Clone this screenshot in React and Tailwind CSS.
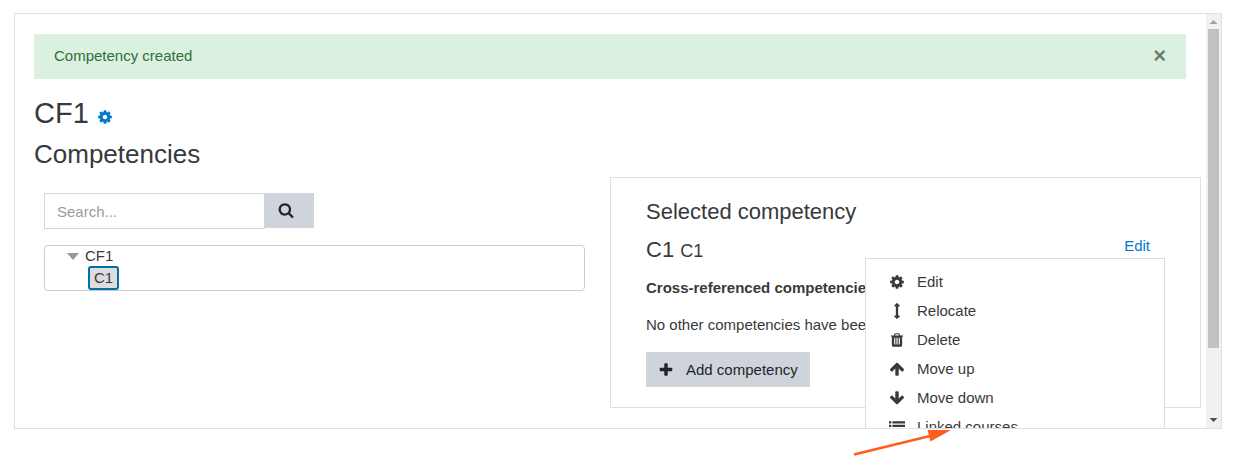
import React from "react";

const PATHS = {
  cog: "M1152 896q0-106-75-181t-181-75-181 75-75 181 75 181 181 75 181-75 75-181zm512-109v222q0 12-8 23t-20 13l-185 28q-19 54-39 91 35 50 107 138 10 12 10 25t-9 23q-27 37-99 108t-94 71q-12 0-26-9l-138-108q-44 23-91 38-16 136-29 186-7 28-36 28h-222q-14 0-24.5-8.5t-11.5-21.5l-28-184q-49-16-90-37l-141 107q-10 9-25 9-14 0-25-11-126-114-165-168-7-10-7-23 0-12 8-23 15-21 51-66.5t54-70.5q-27-50-41-99l-183-27q-13-2-21-12.5t-8-23.5v-222q0-12 8-23t19-13l186-28q14-46 39-92-40-57-107-138-10-12-10-24 0-10 9-23 26-36 98.5-107.5t94.5-71.5q13 0 26 10l138 107q44-23 91-38 16-136 29-186 7-28 36-28h222q14 0 24.5 8.5t11.5 21.5l28 184q49 16 90 37l142-107q9-9 24-9 13 0 25 10 129 119 165 170 7 8 7 22 0 12-8 23-15 21-51 66.5t-54 70.5q26 50 41 98l183 28q13 2 21 12.5t8 23.5z",
  search:
    "M1216 832q0-185-131.5-316.5t-316.5-131.5-316.5 131.5-131.5 316.5 131.5 316.5 316.5 131.5 316.5-131.5 131.5-316.5zm512 832q0 52-38 90t-90 38q-54 0-90-38l-343-342q-179 124-399 124-143 0-273.5-55.5t-225-150-150-225-55.5-273.5 55.5-273.5 150-225 225-150 273.5-55.5 273.5 55.5 225 150 150 225 55.5 273.5q0 220-124 399l343 343q37 37 37 90z",
  plus: "M1600 736v192q0 40-28 68t-68 28h-416v416q0 40-28 68t-68 28h-192q-40 0-68-28t-28-68v-416h-416q-40 0-68-28t-28-68v-192q0-40 28-68t68-28h416v-416q0-40 28-68t68-28h192q40 0 68 28t28 68v416h416q40 0 68 28t28 68z",
  vertical:
    "M1216 320q0 26-19 45t-45 19h-128v1024h128q26 0 45 19t19 45-19 45l-256 256q-19 19-45 19t-45-19l-256-256q-19-19-19-45t19-45 45-19h128v-1024h-128q-26 0-45-19t-19-45 19-45l256-256q19-19 45-19t45 19l256 256q19 19 19 45z",
  trash:
    "M704 1376v-704q0-14-9-23t-23-9h-64q-14 0-23 9t-9 23v704q0 14 9 23t23 9h64q14 0 23-9t9-23zm256 0v-704q0-14-9-23t-23-9h-64q-14 0-23 9t-9 23v704q0 14 9 23t23 9h64q14 0 23-9t9-23zm256 0v-704q0-14-9-23t-23-9h-64q-14 0-23 9t-9 23v704q0 14 9 23t23 9h64q14 0 23-9t9-23zm-544-992h448l-48-117q-7-9-17-11h-317q-10 2-17 11zm928 32v64q0 14-9 23t-23 9h-96v948q0 83-47 143.5t-113 60.5h-832q-66 0-113-58.5t-47-141.5v-952h-96q-14 0-23-9t-9-23v-64q0-14 9-23t23-9h309l70-167q15-37 54-63t79-26h320q40 0 79 26t54 63l70 167h309q14 0 23 9t9 23z",
  up: "M1675 971q0 51-37 90l-75 75q-38 38-91 38-54 0-90-38l-294-293v704q0 52-37.5 84.5t-90.5 32.5h-128q-53 0-90.5-32.5t-37.5-84.5v-704l-294 293q-36 38-90 38t-90-38l-75-75q-38-38-38-90 0-53 38-91l651-651q35-37 90-37 54 0 91 37l651 651q37 39 37 91z",
  down: "M1675 832q0 53-37 90l-651 652q-39 37-91 37-53 0-90-37l-651-652q-38-36-38-90 0-53 38-91l74-75q39-37 91-37 53 0 90 37l294 294v-704q0-52 38-90t90-38h128q52 0 90 38t38 90v704l294-294q37-37 90-37 52 0 91 37l75 75q37 39 37 91z",
  list: "M0 256h256v256h-256zM384 256h1408v256h-1408zM0 640h256v256h-256zM384 640h1408v256h-1408zM0 1024h256v256h-256zM384 1024h1408v256h-1408zM0 1408h256v256h-256zM384 1408h1408v256h-1408z",
};

function Icon({ name, className = "" }) {
  return (
    <svg viewBox="0 0 1792 1792" fill="currentColor" aria-hidden="true" className={`size-4 shrink-0 ${className}`}>
      <path d={PATHS[name]} />
    </svg>
  );
}

const ACTIONS = [
  ["cog", "Edit"],
  ["vertical", "Relocate"],
  ["trash", "Delete"],
  ["up", "Move up"],
  ["down", "Move down"],
  ["list", "Linked courses"],
];

function ActionsMenu() {
  return (
    <ul className="absolute top-full right-0 z-10 w-[300px] border border-[#dcdcdc] bg-white py-2">
      {ACTIONS.map(([icon, label]) => (
        <li key={label}>
          <button type="button" className="flex w-full items-center gap-3 px-[23px] py-1 text-left leading-[21px] whitespace-nowrap">
            <Icon name={icon} />
            {label}
          </button>
        </li>
      ))}
    </ul>
  );
}

function Scrollbar() {
  return (
    <div aria-hidden="true" className="flex w-[15px] shrink-0 flex-col items-center bg-[#f1f1f1]">
      <svg viewBox="0 0 15 15" className="size-[15px] shrink-0" fill="#a3a3a3">
        <path d="M3.5 10h8l-4-4z" />
      </svg>
      <div className="min-h-0 w-full flex-1 px-[2px]">
        <div className="h-[83%] bg-[#c1c1c1]" />
      </div>
      <svg viewBox="0 0 15 15" className="size-[15px] shrink-0" fill="#505050">
        <path d="M3.5 5h8l-4 4z" />
      </svg>
    </div>
  );
}

export default function App() {
  return (
    <div className="relative flex h-screen flex-col bg-white px-[14px] pt-[13px] pb-[43px] font-['Liberation_Sans',Arial,sans-serif] text-[15px] leading-[22px] text-[#373a3c]">
      <div className="flex min-h-0 flex-1 border border-[#e0e0e0]">
        <main className="min-w-0 flex-1 overflow-hidden p-5 pl-[19px]">
          <div role="alert" className="flex items-center justify-between bg-[#dcf0e0] px-5 pt-[10px] pb-3 text-[#2f6f3a]">
            <span className="leading-[23px]">Competency created</span>
            <button type="button" aria-label="Close" className="text-[22px] leading-[23px] font-bold text-black/50">
              ×
            </button>
          </div>

          <h2 className="mt-4 flex items-center gap-2 text-[29px] leading-[36px]">
            CF1
            <a href="#settings" aria-label="Framework settings" className="pt-2 text-[#0078d0]">
              <Icon name="cog" />
            </a>
          </h2>
          <h3 className="mt-2 text-[26px] leading-[30px]">Competencies</h3>

          <div className="-mx-[15px] mt-2 grid grid-cols-2">
            <section className="px-[25px] pt-4">
              <form className="flex">
                <input
                  type="text"
                  aria-label="Search"
                  placeholder="Search..."
                  className="h-9 w-[221px] border border-[#cfd8dc] px-3 placeholder:text-[#999c9f]"
                />
                <button type="submit" aria-label="Search" className="h-[35px] w-[49px] bg-[#ced4da] pb-0.5 pl-[13px] text-[#212529]">
                  <Icon name="search" />
                </button>
              </form>
              <ul role="tree" className="mt-4 rounded-[4px] border border-[#cccccc] pl-[22px]">
                <li role="treeitem" aria-expanded="true">
                  <div className="flex items-center gap-[6px] leading-[20px]">
                    <svg viewBox="0 0 12 7" className="h-[7px] w-3" fill="#999">
                      <path d="M0 0h12l-6 7z" />
                    </svg>
                    CF1
                  </div>
                  <ul role="group" className="flex pl-[21px]">
                    <li role="treeitem" aria-selected="true" className="rounded-[3px] border-2 border-[#0070a8] bg-[#dddddd] px-1 leading-[20px]">
                      C1
                    </li>
                  </ul>
                </li>
              </ul>
            </section>

            <section className="border border-[#e0e0e0] px-[35px] pt-[21px] pb-5">
              <h4 className="text-[22px] leading-[26px]">Selected competency</h4>
              <div className="mt-2 flex items-start justify-between">
                <h4 className="pt-1 text-[22px] leading-[26px]">
                  C1 <small className="text-[18px]">C1</small>
                </h4>
                <div className="relative">
                  <a href="#edit" className="mr-[15px] block py-px leading-[23px] text-[#0078d0]">
                    Edit
                  </a>
                  <ActionsMenu />
                </div>
              </div>
              <p className="mt-[13px] font-bold">Cross-referenced competencies:</p>
              <p className="mt-[15px]">No other competencies have been cross-referenced.</p>
              <button type="button" className="mt-4 flex h-[35px] items-center gap-3 bg-[#ced4da] px-3 text-[#212529]">
                <Icon name="plus" />
                Add competency
              </button>
            </section>
          </div>
        </main>
        <Scrollbar />
      </div>

      <svg viewBox="0 0 100 28" aria-hidden="true" className="absolute top-[429px] left-[852px] h-7 w-[100px]">
        <path d="M2 25.500 78 7" stroke="#ff5e1a" strokeWidth="2.400" />
        <path d="M99 1H75.500l3 11.500z" fill="#ff5e1a" />
      </svg>
    </div>
  );
}
